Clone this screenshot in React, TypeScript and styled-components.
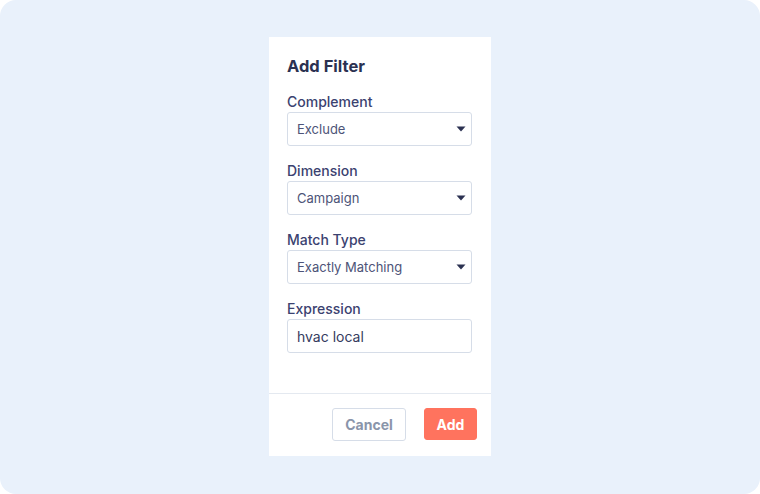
import { FC } from 'react';
import styled, { createGlobalStyle } from 'styled-components';

const GlobalStyle = createGlobalStyle`
    html, body {
        margin: 0;
        padding: 0;
        background: #ffffff;
    }
    * {
        box-sizing: border-box;
    }
`;

const Page = styled.div`
    width: 760px;
    height: 494px;
    background-color: #e9f1fb;
    border-radius: 16px;
    display: flex;
    justify-content: center;
    padding-top: 37px;
    font-family: Inter, 'Noto Sans', sans-serif;
`;

const Card = styled.div`
    width: 222px;
    height: 419px;
    background-color: #ffffff;
    display: flex;
    flex-direction: column;
`;

const Body = styled.div`
    padding: 17px 19px 40px 18px;
    display: flex;
    flex-direction: column;
    border-bottom: 1px solid #e4e9f0;
`;

const Title = styled.h2`
    margin: 0 0 14px;
    font-size: 16.5px;
    line-height: 24px;
    font-weight: 700;
    color: #2b3151;
`;

const Group = styled.div`
    display: flex;
    flex-direction: column;
    &:not(:last-child) {
        margin-bottom: 15px;
    }
`;

const Label = styled.label`
    font-size: 14px;
    line-height: 20px;
    font-weight: 500;
    color: #3b4270;
`;

const Field = styled.div<{ $input?: boolean }>`
    height: 34px;
    border: 1px solid #d6dde8;
    border-radius: 3px;
    display: flex;
    align-items: center;
    justify-content: space-between;
    padding: 0 5px 0 9px;
    font-size: ${(p) => (p.$input ? '14px' : '13px')};
    color: ${(p) => (p.$input ? '#353b5e' : '#4d5478')};
`;

const Caret = styled.svg`
    width: 10px;
    height: 6px;
    fill: #2b3151;
`;

const Footer = styled.div`
    flex: 1;
    display: flex;
    align-items: center;
    justify-content: flex-end;
    gap: 18px;
    padding: 0 14px 2px 0;
`;

const Button = styled.button<{ $primary?: boolean }>`
    width: ${(p) => (p.$primary ? '53px' : '74px')};
    height: ${(p) => (p.$primary ? '32px' : '33px')};
    padding: 0;
    border-radius: 3px;
    font-family: inherit;
    font-size: 14px;
    font-weight: 700;
    cursor: pointer;
    border: 1px solid ${(p) => (p.$primary ? '#ff735e' : '#d6dde8')};
    background-color: ${(p) => (p.$primary ? '#ff735e' : '#ffffff')};
    color: ${(p) => (p.$primary ? '#ffffff' : '#8a95aa')};
`;

const SelectField: FC<{ label: string; value: string }> = ({ label, value }) => (
    <Group>
        <Label>{label}</Label>
        <Field>
            <span>{value}</span>
            <Caret viewBox='0 0 10 6'>
                <path d='M0.5 0.5 L9.5 0.5 L5 5.5 Z' />
            </Caret>
        </Field>
    </Group>
);

const App: FC = () => {
    return (
        <>
            <GlobalStyle />
            <Page>
                <Card>
                    <Body>
                        <Title>Add Filter</Title>
                        <SelectField label='Complement' value='Exclude' />
                        <SelectField label='Dimension' value='Campaign' />
                        <SelectField label='Match Type' value='Exactly Matching' />
                        <Group>
                            <Label>Expression</Label>
                            <Field $input>
                                <span>hvac local</span>
                            </Field>
                        </Group>
                    </Body>
                    <Footer>
                        <Button>Cancel</Button>
                        <Button $primary>Add</Button>
                    </Footer>
                </Card>
            </Page>
        </>
    );
};

export default App;
